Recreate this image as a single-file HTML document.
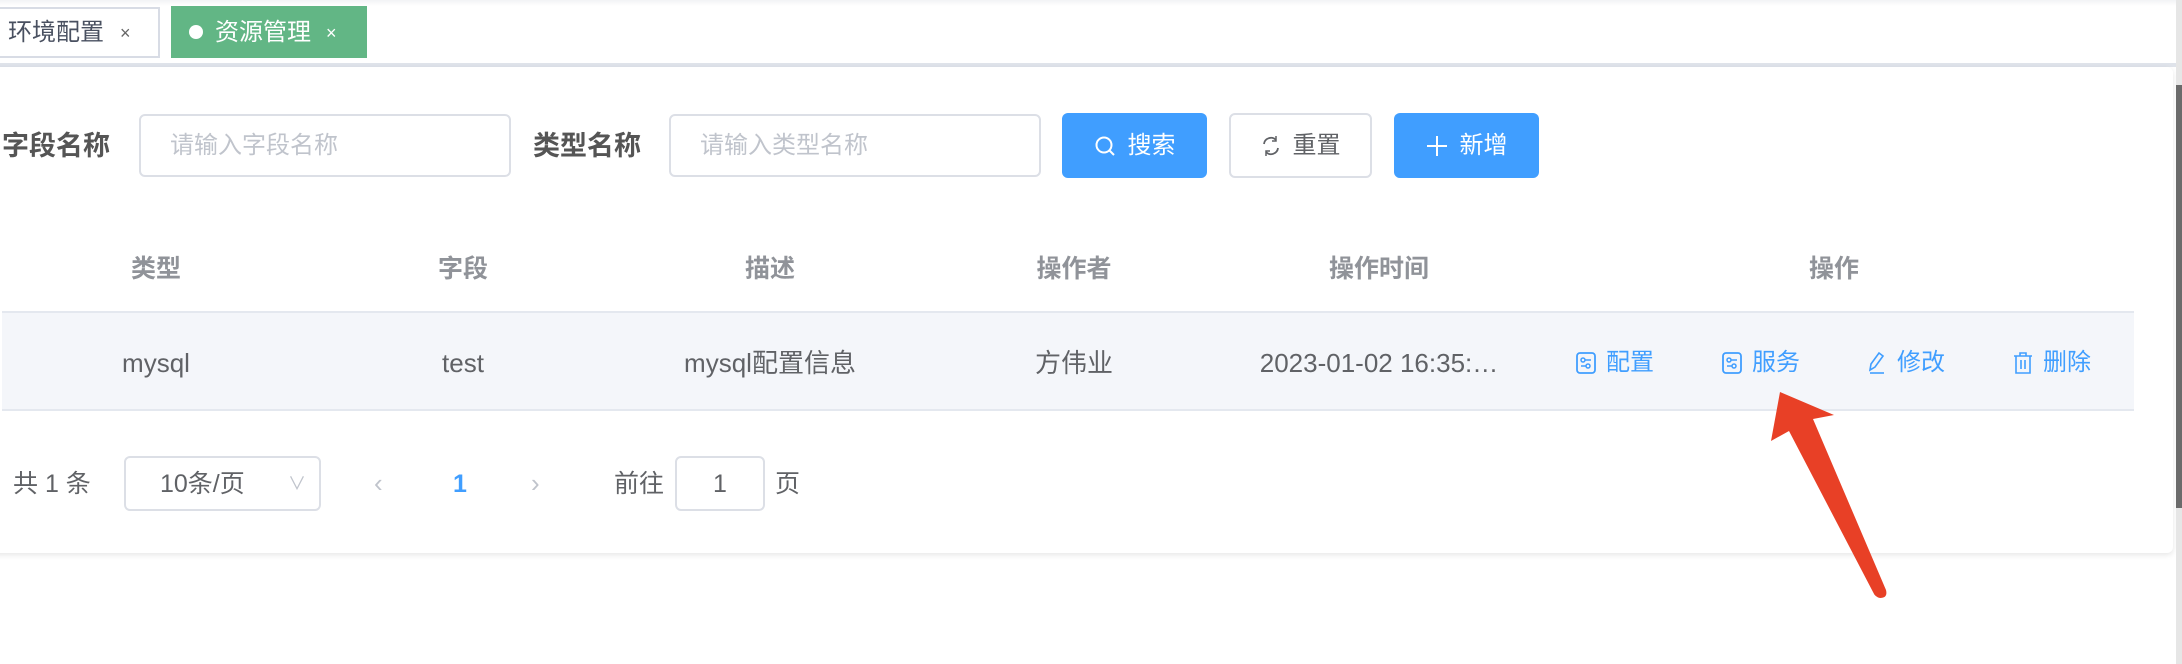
<!DOCTYPE html>
<html><head><meta charset="utf-8"><style>
*{margin:0;padding:0;box-sizing:border-box}
body{width:2182px;height:664px;overflow:hidden;background:#fff;position:relative;font-family:"Liberation Sans","Noto Sans CJK SC",sans-serif;color:#606266}
.a{position:absolute;white-space:nowrap;line-height:40px}
.inp{position:absolute;border:2px solid #dcdfe6;border-radius:6px;background:#fff}
.btn{position:absolute;border-radius:6px;font-size:24px;display:flex;align-items:center;justify-content:center;gap:12px;line-height:30px}
.th{position:absolute;top:249px;font-size:25px;line-height:40px;color:#909399;font-weight:bold;transform:translateX(-50%);white-space:nowrap}
.td{position:absolute;top:343px;height:40px;font-size:26px;line-height:40px;color:#606266;transform:translateX(-50%);white-space:nowrap;display:flex;align-items:center}
.act{position:absolute;top:343px;height:40px;font-size:24px;line-height:40px;color:#409eff;display:flex;align-items:center;gap:10px}
</style></head><body>
<div class="a" style="left:0;top:0;width:2182px;height:6px;background:linear-gradient(#f2f3f5,#fff)"></div>
<div class="a" style="left:-4px;top:7px;width:164px;height:51px;border:2px solid #d8dce5;background:#fff"></div>
<div class="a" style="left:8px;top:13px;font-size:24px;color:#495060">环境配置</div>
<div class="a" style="left:120px;top:13px;font-size:18px;color:#666">×</div>
<div class="a" style="left:171px;top:6px;width:196px;height:52px;background:#62b685"></div>
<div class="a" style="left:189px;top:25px;width:14px;height:14px;border-radius:50%;background:#fff"></div>
<div class="a" style="left:215px;top:13px;font-size:24px;color:#fff">资源管理</div>
<div class="a" style="left:326px;top:13px;font-size:18px;color:#fff">×</div>
<div class="a" style="left:0;top:63px;width:2176px;height:4px;background:#dfe3ea"></div>
<div class="a" style="left:-10px;top:67px;width:2183px;height:486px;background:#fff;border-radius:6px;box-shadow:0 2px 6px rgba(0,0,0,.1)"></div>
<div class="a" style="left:2176px;top:0;width:6px;height:664px;background:#e6e6e6"></div>
<div class="a" style="left:2176px;top:85px;width:6px;height:423px;background:#6b6b6b"></div>

<div class="a" style="left:2px;top:126px;font-size:27px;font-weight:bold;color:#555">字段名称</div>
<div class="inp" style="left:139px;top:114px;width:372px;height:63px"></div>
<div class="a" style="left:170px;top:126px;font-size:24px;color:#c0c4cc">请输入字段名称</div>
<div class="a" style="left:533px;top:126px;font-size:27px;font-weight:bold;color:#555">类型名称</div>
<div class="inp" style="left:669px;top:114px;width:372px;height:63px"></div>
<div class="a" style="left:700px;top:126px;font-size:24px;color:#c0c4cc">请输入类型名称</div>
<div class="btn" style="left:1062px;top:113px;width:145px;height:65px;background:#409eff;color:#fff"><svg width="22" height="22" viewBox="0 0 22 22"><circle cx="10" cy="10" r="7.5" fill="none" stroke="#fff" stroke-width="2"/><path d="M15.5 15.5L20 20" stroke="#fff" stroke-width="2"/></svg>搜索</div>
<div class="btn" style="left:1229px;top:113px;width:143px;height:65px;border:2px solid #dcdfe6;color:#606266"><svg width="20" height="22" viewBox="0 0 20 22"><path d="M3 9A7 7 0 0 1 15 5M17 13A7 7 0 0 1 5 17" fill="none" stroke="#606266" stroke-width="1.8"/><path d="M15 1v5h-4M5 21v-5h4" fill="none" stroke="#606266" stroke-width="1.5"/></svg>重置</div>
<div class="btn" style="left:1394px;top:113px;width:145px;height:65px;background:#409eff;color:#fff"><svg width="22" height="22" viewBox="0 0 22 22"><path d="M11 1v20M1 11h20" stroke="#fff" stroke-width="2"/></svg>新增</div>

<div class="th" style="left:156px">类型</div>
<div class="th" style="left:463px">字段</div>
<div class="th" style="left:770px">描述</div>
<div class="th" style="left:1074px">操作者</div>
<div class="th" style="left:1379px">操作时间</div>
<div class="th" style="left:1834px">操作</div>
<div class="a" style="left:2px;top:311px;width:2132px;height:100px;background:#f4f6fa;border-top:2px solid #e4e8ef;border-bottom:2px solid #e4e8ef"></div>
<div class="td" style="left:156px">mysql</div>
<div class="td" style="left:463px">test</div>
<div class="td" style="left:770px">mysql配置信息</div>
<div class="td" style="left:1074px">方伟业</div>
<div class="td" style="left:1379px">2023-01-02 16:35:…</div>
<div class="act" style="left:1576px"><svg width="20" height="22" viewBox="0 0 20 22"><rect x="1" y="1" width="18" height="20" rx="3" fill="none" stroke="#409eff" stroke-width="1.8"/><circle cx="7" cy="8" r="2" fill="none" stroke="#409eff" stroke-width="1.5"/><circle cx="12" cy="14" r="2" fill="none" stroke="#409eff" stroke-width="1.5"/><path d="M9 8h6M5 14h5" stroke="#409eff" stroke-width="1.5"/></svg>配置</div>
<div class="act" style="left:1722px"><svg width="20" height="22" viewBox="0 0 20 22"><rect x="1" y="1" width="18" height="20" rx="3" fill="none" stroke="#409eff" stroke-width="1.8"/><circle cx="7" cy="8" r="2" fill="none" stroke="#409eff" stroke-width="1.5"/><circle cx="12" cy="14" r="2" fill="none" stroke="#409eff" stroke-width="1.5"/><path d="M9 8h6M5 14h5" stroke="#409eff" stroke-width="1.5"/></svg>服务</div>
<div class="act" style="left:1867px"><svg width="20" height="24" viewBox="0 0 20 24"><path d="M3 19L4 13L12 2L16 5L8 16Z" fill="none" stroke="#409eff" stroke-width="1.6"/><path d="M3 22h14" stroke="#409eff" stroke-width="1.6"/></svg>修改</div>
<div class="act" style="left:2013px"><svg width="20" height="24" viewBox="0 0 20 24"><path d="M1 5h18M7 5V2h6v3M3 5v17h14V5M8 9v9M12 9v9" fill="none" stroke="#409eff" stroke-width="1.6"/></svg>删除</div>

<div class="a" style="left:13px;top:464px;font-size:25px">共 1 条</div>
<div class="inp" style="left:124px;top:456px;width:197px;height:55px"></div>
<div class="a" style="left:160px;top:464px;font-size:25px">10条/页</div>
<div class="a" style="left:288px;top:464px;font-size:18px;color:#c0c4cc">∨</div>
<div class="a" style="left:374px;top:463px;font-size:26px;color:#c0c4cc">‹</div>
<div class="a" style="left:453px;top:464px;font-size:25px;color:#409eff;font-weight:bold">1</div>
<div class="a" style="left:531px;top:463px;font-size:26px;color:#c0c4cc">›</div>
<div class="a" style="left:614px;top:464px;font-size:25px">前往</div>
<div class="inp" style="left:675px;top:456px;width:90px;height:55px"></div>
<div class="a" style="left:713px;top:464px;font-size:25px">1</div>
<div class="a" style="left:775px;top:464px;font-size:25px">页</div>

<svg class="a" style="left:0;top:0" width="2182" height="664"><path d="M1780 392L1834 415L1813 419L1886 590Q1888 598 1880 598Q1875 597 1873 592L1789 431L1771 441Z" fill="#e84026"/></svg>
</body></html>
